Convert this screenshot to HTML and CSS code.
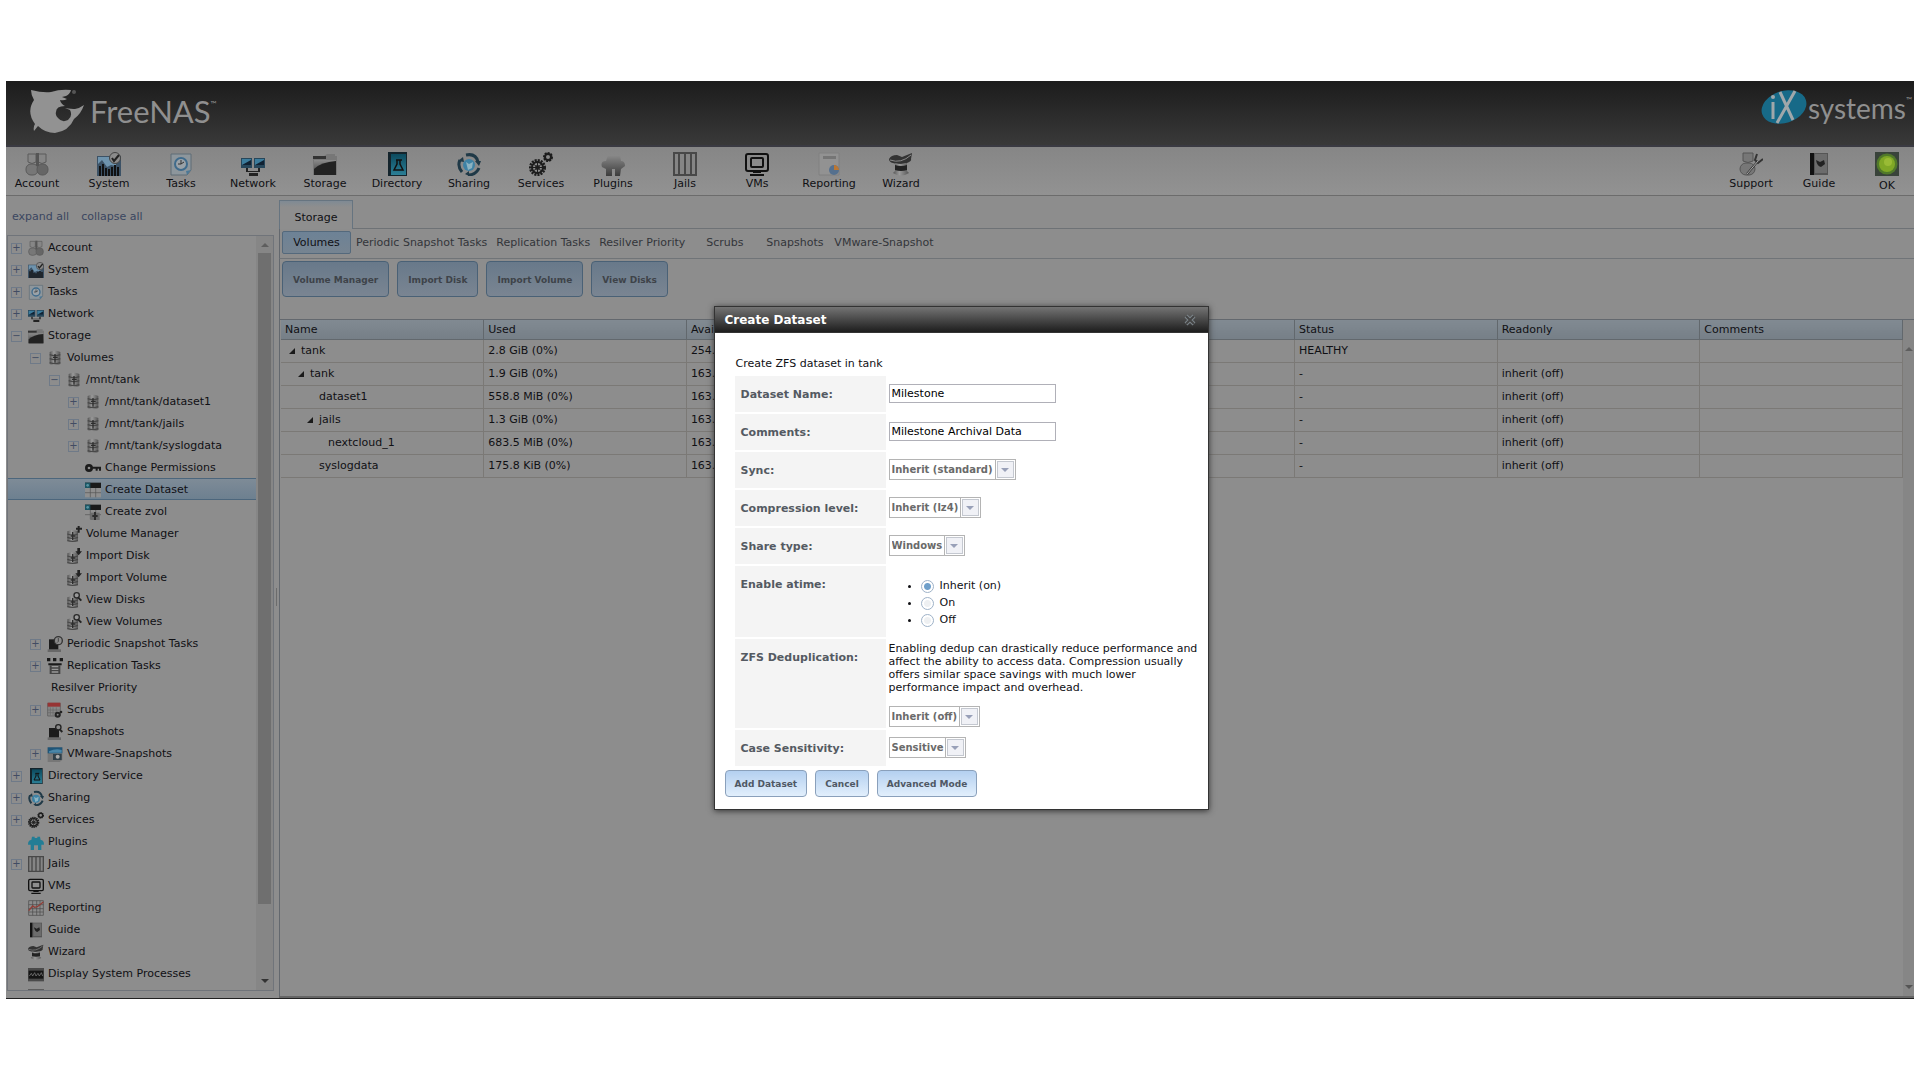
FILE: index.html
```html
<!DOCTYPE html>
<html lang="en">
<head>
<meta charset="utf-8">
<title>FreeNAS - Storage</title>
<link rel="stylesheet" href="styles.css">
</head>
<body>
<svg class="sprite" aria-hidden="true">
  <defs>
    <linearGradient id="g-steel" x1="0" y1="0" x2="0" y2="1"><stop offset="0" stop-color="#8a8a8a"/><stop offset="1" stop-color="#3c3c3c"/></linearGradient>
    <linearGradient id="g-teal" x1="0" y1="0" x2="0" y2="1"><stop offset="0" stop-color="#0c4a5e"/><stop offset="1" stop-color="#2b7f96"/></linearGradient>
    <linearGradient id="g-disk" x1="0" y1="0" x2="1" y2="0"><stop offset="0" stop-color="#555"/><stop offset=".4" stop-color="#9a9a9a"/><stop offset="1" stop-color="#555"/></linearGradient>
  </defs>
  <symbol id="account" viewBox="0 0 24 24"><g stroke="#5a5a5a"><path d="M3 2h8v8q-4 3-8 0zM13 2h8v8q-4 3-8 0z" fill="#868686"/><rect x="1" y="12" width="12" height="11" rx="5" fill="#777"/><rect x="12" y="12" width="11" height="11" rx="5" fill="#666"/></g><path d="M11 1h3v13h-3z" fill="#555"/></symbol>
  <symbol id="system" viewBox="0 0 24 24"><path d="M0 4h24v20H0z" fill="#3c5266"/><path d="M1 5h18v9l-5-1-4 2-5-7-4 4z" fill="#6e93ad"/><path d="M3 24V14M6 24V12M9 24v-8M12 24v-7M15 24v-9M18 24V13M21 24v-9" stroke="#111" stroke-width="2"/><circle cx="18" cy="6" r="5.500" fill="#8b8b8b" stroke="#444"/><path d="M15 6l2 3 5-6" fill="none" stroke="#222" stroke-width="2"/></symbol>
  <symbol id="tasks" viewBox="0 0 24 24"><path d="M2 2h20v16l-4 5H2z" fill="#8d969c" stroke="#5f6d76"/><path d="M18 23l4-5-5 1z" fill="#4c7896"/><circle cx="12" cy="12" r="6" fill="#9aa2a8" stroke="#3f6b8c" stroke-width="2"/><path d="M12 8v4l3-2M9 12h3" fill="none" stroke="#333"/></symbol>
  <symbol id="network" viewBox="0 0 24 24"><path d="M0 6h11v10H0zM13 6h11v10H13z" fill="#27475b"/><path d="M1 7h9v6H1zM14 7h9v6h-9z" fill="#3c7c9c"/><path d="M1 13l9-5v5zM14 13l9-5v5z" fill="#123"/><path d="M5 16h2v3H5zM17 16h2v3h-2zM5 19h14v1H5zM8 21h9v3H8z" fill="#222"/></symbol>
  <symbol id="storage" viewBox="0 0 24 24"><path d="M0 4h11l3-2h8v2h2v19H0z" fill="#777"/><path d="M0 4h13v3H0z" fill="#333"/><path d="M1 8h22v15H1z" fill="url(#g-steel)"/><path d="M1 23V17Q8 10 23 9v14z" fill="#222"/></symbol>
  <symbol id="directory" viewBox="0 0 24 24"><path d="M3 0h19v24H3z" fill="#14242c"/><path d="M6 2h15v21H6z" fill="url(#g-teal)"/><path d="M11 8h6M12 8v4l-3 6h9l-3-6V8" fill="none" stroke="#111" stroke-width="1.500"/></symbol>
  <symbol id="sharing" viewBox="0 0 24 24"><circle cx="12" cy="13" r="6" fill="#3e82a5"/><path d="M9 10l3 2 4-2-1 6-4 2z" fill="#8cb3c2"/><path d="M9 3q10-2 12 7M22 16q-3 7-11 7M5 20Q0 14 3 8" fill="none" stroke="#1f3947" stroke-width="3"/><path d="M18 9h6l-2 5zM12 19v5l-4-2zM1 9l5-4 1 5z" fill="#1f3947"/></symbol>
  <symbol id="services" viewBox="0 0 24 24"><g fill="none" stroke="#1c1c1c"><circle cx="8.500" cy="15.500" r="7" stroke-width="3" stroke-dasharray="2 1"/><circle cx="8.500" cy="15.500" r="5.500" stroke-width="2"/><circle cx="8.500" cy="15.500" r="2"/><path d="M8.500 10v11M3 15.500h11M4.500 12l8 7M12.500 12l-8 7"/><circle cx="19" cy="5" r="4" stroke-width="2" stroke-dasharray="2 1"/><circle cx="19" cy="5" r="3" stroke-width="2"/></g></symbol>
  <symbol id="plug-gray" viewBox="0 0 24 24"><path d="M7 3h12l1 6q4 0 4 5l-4 3-1 7h-5v-7h-3v7H5v-7l-4-2q-2-6 4-6z" fill="url(#g-steel)"/></symbol>
  <symbol id="plugins" viewBox="0 0 24 24"><path d="M6 4h4v2h4V4h4l1 5q5 0 5 7h-4v8h-5v-7H9v7H4v-8H0q0-7 5-7z" fill="#237d95"/></symbol>
  <symbol id="jails" viewBox="0 0 24 24"><path d="M0 0h24v24H0z" fill="#484848"/><path d="M2 2h3v20H2zM7 2h4v20H7zM13 2h4v20h-4zM19 2h3v20h-3z" fill="#858585"/></symbol>
  <symbol id="vms" viewBox="0 0 24 24"><g fill="none" stroke="#111" stroke-width="2"><rect x="1" y="2" width="22" height="17" rx="2"/><rect x="6" y="6" width="12" height="9" rx="1"/><path d="M8 20h8M5 23h14"/></g></symbol>
  <symbol id="report-page" viewBox="0 0 24 24"><path d="M2 1h20v22H2z" fill="#929292" stroke="#808080"/><path d="M6 4h13v3H6z" fill="#757575"/><circle cx="17" cy="18" r="5" fill="#55708e"/><path d="M17 18v-5a5 5 0 0 1 5 5z" fill="#bb7733"/></symbol>
  <symbol id="reporting" viewBox="0 0 24 24"><path d="M1 1h22v22H1zM7 1v22M13 1v22M18 1v22M1 7h22M1 13h22M1 18h22" fill="none" stroke="#494949"/><path d="M1 16l6-7 3 2 4-1 9-7" fill="none" stroke="#923d36" stroke-width="2"/></symbol>
  <symbol id="wizard" viewBox="0 0 24 24"><path d="M0 7q2-4 8-4l5 2 10-4-1 6q1 2-4 4-9 2-14 0-4-1-4-4z" fill="#333"/><path d="M6 11q6 2 12 0v8l2 2q-8 5-16 0l2-2z" fill="url(#g-disk)"/><path d="M6 13q6 2 12 0v5q-6 2-12 0z" fill="#222"/><path d="M1 8q11 4 21-5" fill="none" stroke="#888"/></symbol>
  <symbol id="support" viewBox="0 0 24 24"><path d="M4 1h10v8q-5 3-10 0z" fill="#777" stroke="#555"/><rect x="1" y="11" width="15" height="12" rx="6" fill="#777" stroke="#555"/><path d="M8 22L19 9M18 2l-2 6 3 3 5-4" fill="none" stroke="#333" stroke-width="2"/><path d="M8 22L19 9" stroke="#aaa"/></symbol>
  <symbol id="guide" viewBox="0 0 24 24"><path d="M3 1h4v22H3z" fill="#111"/><path d="M7 1h14v22H7z" fill="#555"/><path d="M8 2h12v19H8z" fill="#6c6c6c"/><path d="M9 8l4 2 4-2 1 4-4 3q-4-1-5-7z" fill="#222"/></symbol>
  <symbol id="ok" viewBox="0 0 24 24"><path d="M0 0h24v24H0z" fill="#39433a"/><circle cx="12" cy="12" r="10.500" fill="#51792a"/><circle cx="12" cy="12" r="8" fill="#80a826"/><circle cx="13" cy="10" r="4" fill="#99bb35"/></symbol>
  <symbol id="disk" viewBox="0 0 24 24"><path d="M4 3q8-4 16 0v18q-8 4-16 0z" fill="url(#g-disk)"/><path d="M4 7q8 3 16 0M4 13q8 3 16 0M4 19q8 3 16 0" fill="none" stroke="#484848" stroke-width="2"/><path d="M12 6v13M9 11h7" stroke="#2d2d2d" stroke-width="2"/></symbol>
  <symbol id="disk-small" viewBox="0 0 24 24"><path d="M2 8q8-3 16 0v14q-8 3-16 0z" fill="url(#g-disk)"/><path d="M2 12q8 3 16 0M2 17q8 3 16 0M2 22q8 2 16 0" fill="none" stroke="#484848" stroke-width="2"/><path d="M10 9v12M7 15h7" stroke="#2d2d2d" stroke-width="2"/></symbol>
  <symbol id="disk-add" viewBox="0 0 24 24"><use href="#disk-small"/><path d="M19 0v10M15 4h9" stroke="#222" stroke-width="3"/></symbol>
  <symbol id="disk-import" viewBox="0 0 24 24"><use href="#disk-small"/><path d="M17 0h4v5h3l-5 6-5-6h3z" fill="#222"/></symbol>
  <symbol id="disk-view" viewBox="0 0 24 24"><use href="#disk-small"/><circle cx="16" cy="5" r="4" fill="#999" stroke="#2a2a2a" stroke-width="2"/><path d="M18 8l5 5" stroke="#222" stroke-width="3"/></symbol>
  <symbol id="key" viewBox="0 0 24 24"><circle cx="6" cy="12" r="4" fill="none" stroke="#1c1c1c" stroke-width="4"/><path d="M11 10h13v6h-3v-3h-2v3h-3v-3h-5z" fill="#1c1c1c"/></symbol>
  <symbol id="dataset" viewBox="0 0 24 24"><path d="M0 1h24v8H0z" fill="#1a1a1a"/><path d="M0 1h8v8H0z" fill="#1c5563"/><circle cx="4" cy="5" r="2" fill="#5795a3"/><path d="M0 9h24v14H0z" fill="#8f8f8f"/><path d="M8 9v14M16 9v14M0 16h24" stroke="#555"/></symbol>
  <symbol id="zvol" viewBox="0 0 24 24"><use href="#dataset"/><path d="M8 13h14v11H8z" fill="#6c6c6c"/><path d="M15 12v12M11 18h8" stroke="#2d2d2d" stroke-width="3"/></symbol>
  <symbol id="snap-time" viewBox="0 0 24 24"><path d="M1 20h20v4H1z" fill="#686868"/><path d="M3 5h14v15H3z" fill="#1c1c1c"/><circle cx="17" cy="7" r="6" fill="#8b8b8b" stroke="#333" stroke-width="2"/><path d="M17 3v5l-2 2" fill="none" stroke="#222"/></symbol>
  <symbol id="replication" viewBox="0 0 24 24"><path d="M0 0h5v5H0zM9 0h5v5H9zM19 0h5v5h-5zM2 8h20v3H2z" fill="#1a1a1a"/><path d="M4 11h16v13H4z" fill="#444"/><path d="M7 13h10M7 17h10M7 21h10" stroke="#999" stroke-width="2"/></symbol>
  <symbol id="scrubs" viewBox="0 0 24 24"><path d="M1 2h19v19H1z" fill="#888" stroke="#555"/><path d="M1 1h19v6H1z" fill="#973434"/><path d="M5 8v12M9 8v12M14 8v12M1 12h19M1 16h19" stroke="#666"/><circle cx="16" cy="19" r="3" fill="none" stroke="#222" stroke-width="3"/><circle cx="21" cy="15" r="2" fill="#222"/></symbol>
  <symbol id="snapshots" viewBox="0 0 24 24"><path d="M1 20h20v4H1z" fill="#686868"/><path d="M3 6h15v14H3z" fill="#1c1c1c"/><circle cx="17" cy="5" r="4" fill="#888" stroke="#222" stroke-width="2"/><path d="M19 8l4 4" stroke="#222" stroke-width="3"/></symbol>
  <symbol id="vmsnap" viewBox="0 0 24 24"><path d="M1 2h22v19l-4 3H1z" fill="#777"/><path d="M1 2h22v9H1z" fill="#1f5578"/><path d="M3 8q10-5 19-2v4H3z" fill="#4a86a8"/><path d="M9 12h13v9H9z" fill="#30404a"/><circle cx="16" cy="16" r="3" fill="#aaa"/></symbol>
  <symbol id="processes" viewBox="0 0 24 24"><path d="M0 3h24v20H0z" fill="#4a4a4a"/><path d="M1 7h22v12H1z" fill="#151515"/><path d="M2 15l3-4 2 4 3-5 2 5 3-4 2 4 3-5 2 5" fill="none" stroke="#888"/></symbol>
  <symbol id="shell" viewBox="0 0 24 24"><path d="M0 2h24v20H0z" fill="#444"/><path d="M2 5h20v15H2z" fill="#888"/></symbol>
</svg>

<div class="app">
  <header class="banner">
    <div class="brand">
      <svg class="brand-mark" viewBox="0 0 54 46" aria-hidden="true"><path d="M1 1q12 3 20 2Q30 0 41 1q-1 4-5 6l-4 1 5 2q-3 2-7 1 1 4 5 6-9 0-9 6-1 3 2 6 4 5 10 2 5-4 2-10l-5-2q7 1 10 1 5-1 9-4-3 9-10 14-5 12-19 14-10 0-17-7l-4 5q-1-4 1-7Q-4 23 4 11 1 6 1 1z" fill="#929292"/><circle cx="44" cy="3" r="2" fill="#555"/></svg>
      <span class="brand-name">FreeNAS<sup>™</sup></span>
    </div>
    <div class="vendor">
      <svg class="vendor-mark" viewBox="0 0 48 36" aria-hidden="true"><ellipse cx="24" cy="18" rx="23" ry="16" transform="rotate(-18 24 18)" fill="#176a88"/><path d="M13 13v17M20 3l13 28M35 2L17 34" fill="none" stroke="#a0a7aa" stroke-width="3"/><circle cx="13" cy="8" r="2" fill="#a0a7aa"/></svg>
      <span class="vendor-name">systems<sup>™</sup></span>
    </div>
  </header>

  <nav class="toolbar" aria-label="Main">
    <div class="tools">
      <a href="#" class="tool"><svg><use href="#account"/></svg>Account</a>
      <a href="#" class="tool"><svg><use href="#system"/></svg>System</a>
      <a href="#" class="tool"><svg><use href="#tasks"/></svg>Tasks</a>
      <a href="#" class="tool"><svg><use href="#network"/></svg>Network</a>
      <a href="#" class="tool"><svg><use href="#storage"/></svg>Storage</a>
      <a href="#" class="tool"><svg><use href="#directory"/></svg>Directory</a>
      <a href="#" class="tool"><svg><use href="#sharing"/></svg>Sharing</a>
      <a href="#" class="tool"><svg><use href="#services"/></svg>Services</a>
      <a href="#" class="tool"><svg><use href="#plug-gray"/></svg>Plugins</a>
      <a href="#" class="tool"><svg><use href="#jails"/></svg>Jails</a>
      <a href="#" class="tool"><svg><use href="#vms"/></svg>VMs</a>
      <a href="#" class="tool"><svg><use href="#report-page"/></svg>Reporting</a>
      <a href="#" class="tool"><svg><use href="#wizard"/></svg>Wizard</a>
    </div>
    <div class="tools tools-right">
      <a href="#" class="tool"><svg><use href="#support"/></svg>Support</a>
      <a href="#" class="tool"><svg><use href="#guide"/></svg>Guide</a>
      <a href="#" class="tool tool-status"><svg><use href="#ok"/></svg>OK</a>
    </div>
  </nav>

  <div class="workspace">
    <aside class="sidebar">
      <div class="tree-links"><a href="#">expand all</a><a href="#">collapse all</a></div>
      <div class="tree-box">
        <ul class="tree">
          <li><button class="toggle" aria-label="Expand">+</button><svg><use href="#account"/></svg>Account</li>
          <li><button class="toggle" aria-label="Expand">+</button><svg><use href="#system"/></svg>System</li>
          <li><button class="toggle" aria-label="Expand">+</button><svg><use href="#tasks"/></svg>Tasks</li>
          <li><button class="toggle" aria-label="Expand">+</button><svg><use href="#network"/></svg>Network</li>
          <li><button class="toggle" aria-label="Collapse">−</button><svg><use href="#storage"/></svg>Storage</li>
          <li class="l1"><button class="toggle" aria-label="Collapse">−</button><svg><use href="#disk"/></svg>Volumes</li>
          <li class="l2"><button class="toggle" aria-label="Collapse">−</button><svg><use href="#disk"/></svg>/mnt/tank</li>
          <li class="l3"><button class="toggle" aria-label="Expand">+</button><svg><use href="#disk"/></svg>/mnt/tank/dataset1</li>
          <li class="l3"><button class="toggle" aria-label="Expand">+</button><svg><use href="#disk"/></svg>/mnt/tank/jails</li>
          <li class="l3"><button class="toggle" aria-label="Expand">+</button><svg><use href="#disk"/></svg>/mnt/tank/syslogdata</li>
          <li class="l3 leaf"><svg><use href="#key"/></svg>Change Permissions</li>
          <li class="l3 leaf selected"><svg><use href="#dataset"/></svg>Create Dataset</li>
          <li class="l3 leaf"><svg><use href="#zvol"/></svg>Create zvol</li>
          <li class="l2 leaf"><svg><use href="#disk-add"/></svg>Volume Manager</li>
          <li class="l2 leaf"><svg><use href="#disk-import"/></svg>Import Disk</li>
          <li class="l2 leaf"><svg><use href="#disk-import"/></svg>Import Volume</li>
          <li class="l2 leaf"><svg><use href="#disk-view"/></svg>View Disks</li>
          <li class="l2 leaf"><svg><use href="#disk-view"/></svg>View Volumes</li>
          <li class="l1"><button class="toggle" aria-label="Expand">+</button><svg><use href="#snap-time"/></svg>Periodic Snapshot Tasks</li>
          <li class="l1"><button class="toggle" aria-label="Expand">+</button><svg><use href="#replication"/></svg>Replication Tasks</li>
          <li class="l1 leaf plain">Resilver Priority</li>
          <li class="l1"><button class="toggle" aria-label="Expand">+</button><svg><use href="#scrubs"/></svg>Scrubs</li>
          <li class="l1 leaf"><svg><use href="#snapshots"/></svg>Snapshots</li>
          <li class="l1"><button class="toggle" aria-label="Expand">+</button><svg><use href="#vmsnap"/></svg>VMware-Snapshots</li>
          <li><button class="toggle" aria-label="Expand">+</button><svg><use href="#directory"/></svg>Directory Service</li>
          <li><button class="toggle" aria-label="Expand">+</button><svg><use href="#sharing"/></svg>Sharing</li>
          <li><button class="toggle" aria-label="Expand">+</button><svg><use href="#services"/></svg>Services</li>
          <li class="leaf"><svg><use href="#plugins"/></svg>Plugins</li>
          <li><button class="toggle" aria-label="Expand">+</button><svg><use href="#jails"/></svg>Jails</li>
          <li class="leaf"><svg><use href="#vms"/></svg>VMs</li>
          <li class="leaf"><svg><use href="#reporting"/></svg>Reporting</li>
          <li class="leaf"><svg><use href="#guide"/></svg>Guide</li>
          <li class="leaf"><svg><use href="#wizard"/></svg>Wizard</li>
          <li class="leaf"><svg><use href="#processes"/></svg>Display System Processes</li>
          <li class="leaf"><svg><use href="#shell"/></svg>Shell</li>
        </ul>
        <div class="scrollbar"><span class="arrow up"></span><span class="thumb"></span><span class="arrow down"></span></div>
      </div>
    </aside>
    <div class="splitter"><span></span></div>

    <main class="content">
      <div class="tabs"><button class="tab">Storage</button></div>
      <div class="subtabs">
        <button class="subtab active">Volumes</button>
        <button class="subtab">Periodic Snapshot Tasks</button>
        <button class="subtab">Replication Tasks</button>
        <button class="subtab">Resilver Priority</button>
        <button class="subtab">Scrubs</button>
        <button class="subtab">Snapshots</button>
        <button class="subtab">VMware-Snapshot</button>
      </div>
      <div class="actions">
        <button class="btn">Volume Manager</button>
        <button class="btn">Import Disk</button>
        <button class="btn">Import Volume</button>
        <button class="btn">View Disks</button>
      </div>
      <div class="grid">
        <table class="volumes">
          <thead><tr><th>Name</th><th>Used</th><th>Avai</th><th></th><th></th><th>Status</th><th>Readonly</th><th>Comments</th></tr></thead>
          <tbody>
            <tr><td class="d0"><i class="open"></i>tank</td><td>2.8 GiB (0%)</td><td>254.</td><td></td><td></td><td>HEALTHY</td><td></td><td></td></tr>
            <tr><td class="d1"><i class="open"></i>tank</td><td>1.9 GiB (0%)</td><td>163.</td><td></td><td></td><td>-</td><td>inherit (off)</td><td></td></tr>
            <tr><td class="d2">dataset1</td><td>558.8 MiB (0%)</td><td>163.</td><td></td><td></td><td>-</td><td>inherit (off)</td><td></td></tr>
            <tr><td class="d3"><i class="open"></i>jails</td><td>1.3 GiB (0%)</td><td>163.</td><td></td><td></td><td>-</td><td>inherit (off)</td><td></td></tr>
            <tr><td class="d4">nextcloud_1</td><td>683.5 MiB (0%)</td><td>163.</td><td></td><td></td><td>-</td><td>inherit (off)</td><td></td></tr>
            <tr><td class="d2">syslogdata</td><td>175.8 KiB (0%)</td><td>163.</td><td></td><td></td><td>-</td><td>inherit (off)</td><td></td></tr>
          </tbody>
        </table>
        <div class="grid-scroll"><span class="arrow up"></span><span class="arrow down"></span></div>
      </div>
    </main>
  </div>

  <div class="overlay">
    <section class="dialog" role="dialog" aria-labelledby="dialog-title">
      <div class="dialog-bar">
        <h1 id="dialog-title">Create Dataset</h1>
        <button class="close" aria-label="Close"><svg viewBox="0 0 12 12"><path d="M2 2l8 8M10 2l-8 8" stroke="#7d868c" stroke-width="4"/><path d="M2 2l8 8M10 2l-8 8" stroke="#444" stroke-width="2"/></svg></button>
      </div>
      <form class="dialog-body">
        <p class="intro">Create ZFS dataset in tank</p>
        <div class="fields">
          <div class="field"><label for="name">Dataset Name:</label><div class="control"><input class="text" id="name" type="text" value="Milestone"></div></div>
          <div class="field"><label for="comments">Comments:</label><div class="control"><input class="text" id="comments" type="text" value="Milestone Archival Data"></div></div>
          <div class="field"><label for="sync">Sync:</label><div class="control"><span class="select"><select id="sync"><option>Inherit (standard)</option></select><span class="drop"><i></i></span></span></div></div>
          <div class="field"><label for="comp">Compression level:</label><div class="control"><span class="select"><select id="comp"><option>Inherit (lz4)</option></select><span class="drop"><i></i></span></span></div></div>
          <div class="field"><label for="share">Share type:</label><div class="control"><span class="select"><select id="share"><option>Windows</option></select><span class="drop"><i></i></span></span></div></div>
          <div class="field"><span class="label" id="atime-label">Enable atime:</span>
            <div class="control"><ul class="radios" role="radiogroup" aria-labelledby="atime-label">
              <li><label><input type="radio" name="atime" checked>Inherit (on)</label></li>
              <li><label><input type="radio" name="atime">On</label></li>
              <li><label><input type="radio" name="atime">Off</label></li>
            </ul></div>
          </div>
          <div class="field"><label for="dedup">ZFS Deduplication:</label>
            <div class="control help-control"><p class="help">Enabling dedup can drastically reduce performance and affect the ability to access data. Compression usually offers similar space savings with much lower performance impact and overhead.</p>
            <span class="select"><select id="dedup"><option>Inherit (off)</option></select><span class="drop"><i></i></span></span></div>
          </div>
          <div class="field"><label for="case">Case Sensitivity:</label><div class="control"><span class="select"><select id="case"><option>Sensitive</option></select><span class="drop"><i></i></span></span></div></div>
        </div>
        <div class="dialog-actions">
          <button type="button" class="btn light">Add Dataset</button>
          <button type="button" class="btn light">Cancel</button>
          <button type="button" class="btn light">Advanced Mode</button>
        </div>
      </form>
    </section>
  </div>
</div>
</body>
</html>
```
FILE: styles.css
```css
* { box-sizing: border-box; }
body {
  margin: 0;
  height: 100vh;
  padding: 81px 6px 81px;
  background: #fff;
  color: #101014;
  font: 11px/16px "DejaVu Sans", Verdana, sans-serif;
}
button, input, select { font: inherit; color: inherit; margin: 0; }
a { color: inherit; text-decoration: none; }
ul, p, h1 { margin: 0; padding: 0; }
.sprite { position: absolute; width: 0; height: 0; }

.app {
  position: relative;
  display: flex;
  flex-direction: column;
  height: 100%;
  background: #8d8d8d;
  border-bottom: 1px solid #222;
}

/* Banner */
.banner {
  display: flex;
  justify-content: space-between;
  flex: none;
  height: 66px;
  padding: 0 2px 0 24px;
  background: linear-gradient(#1c1c1c, #393939);
  border-bottom: 2px solid #3a3a42;
}
.brand, .vendor { display: flex; align-items: flex-start; white-space: nowrap; }
.brand-mark { width: 54px; height: 46px; margin-top: 8px; }
.brand-name, .vendor-name {
  color: #8f8f8f;
  font: 400 31px/40px Lato, sans-serif;
}
.brand-name { margin: 10px 0 0 6px; }
.brand-name sup, .vendor-name sup { font-size: 8px; line-height: 8px; vertical-align: 16px; }
.vendor-mark { width: 48px; height: 36px; margin-top: 8px; }
.vendor-name { margin-top: 7px; font-size: 28px; }

/* Toolbar */
.toolbar {
  display: flex;
  justify-content: space-between;
  flex: none;
  height: 49px;
  background: linear-gradient(#868686, #929292);
  border-bottom: 1px solid #6c6c6c;
}
.tools { display: flex; gap: 10px; }
.tool {
  display: flex;
  flex-direction: column;
  align-items: center;
  width: 62px;
  padding-top: 5px;
  line-height: 15px;
}
.tool svg { width: 24px; height: 24px; }
.tools-right { gap: 14px; }
.tools-right .tool { width: 54px; }
.tool-status { line-height: 19px; }

/* Workspace */
.workspace { display: flex; flex: 1; min-height: 0; }
.sidebar {
  display: flex;
  flex-direction: column;
  width: 268px;
  padding: 13px 0 7px 1px;
}
.tree-links { display: flex; gap: 12px; height: 26px; padding-left: 5px; color: #3a4660; }
.tree-box {
  display: flex;
  flex: 1;
  min-height: 0;
  overflow: hidden;
  border: 1px solid #70747a;
}
.tree { flex: 1; list-style: none; }
.tree li {
  display: flex;
  align-items: center;
  height: 22px;
  padding: 2px 0 0 3px;
  white-space: nowrap;
}
.tree svg { width: 16px; height: 16px; margin: 0 4px 0 6px; flex: none; }
.tree .l1 { padding-left: 22px; }
.tree .l2 { padding-left: 41px; }
.tree .l3 { padding-left: 60px; }
.tree .leaf::before { content: ""; width: 11px; }
.tree .plain::before { width: 21px; }
.tree .selected {
  background: linear-gradient(#7e8b97, #6d8090);
  border: solid #4c667c;
  border-width: 1px 0;
}
.toggle {
  width: 11px;
  height: 11px;
  padding: 0;
  border: 1px solid #6f7a88;
  background: #8d8d8d;
  color: #414c63;
  font-size: 10px;
  line-height: 8px;
}
.scrollbar, .grid-scroll {
  display: flex;
  flex-direction: column;
  align-items: center;
  justify-content: space-between;
  background: #868686;
}
.scrollbar { width: 17px; padding: 7px 0; }
.thumb { width: 13px; height: 88%; margin: 6px 0 auto; background: #6f6f6f; }
.arrow { border: 4px solid transparent; border-top-width: 0; border-bottom: 4px solid #5e5e5e; }
.arrow.down { border-top: 4px solid #333; border-bottom-width: 0; }
.splitter {
  display: flex;
  align-items: center;
  justify-content: center;
  width: 5px;
}
.splitter span { width: 1px; height: 18px; background: #6c6c6c; }

/* Content */
.content {
  display: flex;
  flex-direction: column;
  flex: 1;
  min-width: 0;
  border-bottom: 2px solid #666;
}
.tabs { display: flex; height: 33px; padding-top: 4px; border-bottom: 1px solid #6e7276; }
.tab {
  height: 29px;
  width: 74px;
  padding: 5px 0 0;
  border: 1px solid #667480;
  border-bottom: 0;
  background: linear-gradient(#7f8a94, #8e8e8e 6px);
}
.subtabs {
  display: flex;
  gap: 1px;
  height: 30px;
  padding: 2px;
  border-left: 1px solid #63686e;
  border-bottom: 1px solid #707478;
}
.subtab {
  height: 23px;
  min-width: 69px;
  padding: 0 3px;
  border: 1px solid transparent;
  background: none;
  color: #33353a;
  white-space: nowrap;
}
.subtab.active {
  border-color: #54697c;
  border-radius: 2px;
  background: linear-gradient(#6d8296, #768491);
  color: #101014;
}
.actions { display: flex; gap: 8px; padding: 2px 2px 22px; border-left: 1px solid #63686e; }
.btn {
  height: 36px;
  padding: 1px 10px 0;
  border: 1px solid #4a6176;
  border-radius: 4px;
  background: linear-gradient(#68798a, #7a8592);
  color: #3e4349;
  font-weight: bold;
  font-size: 9px;
}
.grid {
  display: flex;
  flex: 1;
  min-height: 0;
  padding-left: 1px;
  border-left: 1px solid #63686e;
  border-top: 1px solid #63686e;
}
.volumes {
  flex: 1;
  align-self: flex-start;
  width: 100%;
  table-layout: fixed;
  border-collapse: collapse;
}
.volumes th, .volumes td {
  height: 23px;
  padding: 0 4px;
  border-right: 1px solid #7b7976;
  border-bottom: 1px solid #7b7976;
  font-weight: normal;
  text-align: left;
  line-height: 16px;
}
.volumes th {
  height: 19px;
  padding: 2px 4px 0;
  border-color: #62686d;
  background: linear-gradient(#818a92, #767f87);
}
.volumes .d0 { padding-left: 8px; }
.volumes .d1 { padding-left: 17px; }
.volumes .d2 { padding-left: 38px; }
.volumes .d3 { padding-left: 26px; }
.volumes .d4 { padding-left: 47px; }
.open {
  display: inline-block;
  margin-right: 6px;
  border-left: 6px solid transparent;
  border-bottom: 6px solid #1a1a1a;
}
.grid-scroll { flex: none; width: 11px; padding: 27px 0 7px; }
.grid-scroll .arrow.down { border-top-color: #555; }

/* Dialog */
.overlay {
  position: absolute;
  inset: 0;
  display: flex;
  align-items: flex-start;
  justify-content: center;
  padding: 225px 0 0 2px;
}
.dialog {
  width: 495px;
  background: #fff;
  border: 1px solid #333;
  box-shadow: 0 1px 6px #333;
}
.dialog-bar {
  display: flex;
  align-items: center;
  justify-content: space-between;
  height: 26px;
  padding: 0 12px 0 10px;
  background: linear-gradient(#747474, #1d1d1d);
  border-bottom: 1px solid #333;
}
.dialog h1 { color: #fff; font-size: 12px; line-height: 16px; }
.close { width: 12px; height: 12px; padding: 0; border: 0; background: none; }
.close svg { display: block; }
.dialog-body { padding: 23px 9px 12px 10px; }
.intro { padding: 0 11px 4px; }
.fields { display: flex; flex-direction: column; gap: 2px; padding-left: 10px; }
.field { display: flex; gap: 3px; min-height: 36px; }
.field > label, .field > .label {
  width: 151px;
  flex: none;
  padding: 11px 6px 9px;
  background: #f4f4f4;
  color: #545a62;
  font-weight: bold;
}
.control { flex: 1; padding-top: 7px; }
.text {
  display: block;
  width: 167px;
  height: 19px;
  margin-top: 1px;
  padding: 0 2px;
  border: 1px solid #b0b0b8;
  background: #fff;
  color: #000;
}
.select {
  display: inline-grid;
  height: 21px;
  border: 1px solid #b4b4b4;
  vertical-align: top;
}
.select select {
  grid-area: 1 / 1;
  appearance: none;
  padding: 0 21px 0 2px;
  border: 0;
  background: #fff;
  color: #6a6a6a;
  font-size: 10px;
  font-weight: bold;
}
.drop {
  grid-area: 1 / 1;
  justify-self: end;
  width: 20px;
  padding: 1px;
  border-left: 1px solid #b4b4b4;
  pointer-events: none;
}
.drop i {
  display: grid;
  place-items: center;
  height: 17px;
  border: 1px solid #c4c8d0;
  background: #f0f1f6;
}
.drop i::before {
  content: "";
  border: 4px solid transparent;
  border-top-color: #98a0b8;
  border-bottom-width: 0;
}
.radios { padding: 4px 0 9px 32px; }
.radios li { height: 17px; line-height: 17px; }
.radios input {
  appearance: none;
  width: 13px;
  height: 13px;
  margin-right: 6px;
  border: 1px solid #9eb2c8;
  border-radius: 50%;
  background: radial-gradient(#eef0f2 3px, #fff 4px);
  vertical-align: middle;
}
.radios input:checked { background: radial-gradient(#6f9fca 3px, #fff 4px); }
.help-control { padding: 3px 0 1px; }
.help { padding-bottom: 12px; line-height: 13px; }
.dialog-actions { display: flex; gap: 8px; padding-top: 4px; }
.light {
  height: 27px;
  padding: 0 9px;
  border-color: #8aa0bb;
  background: linear-gradient(#b4d0f0, #e2effc);
  color: #4f5864;
}
```
